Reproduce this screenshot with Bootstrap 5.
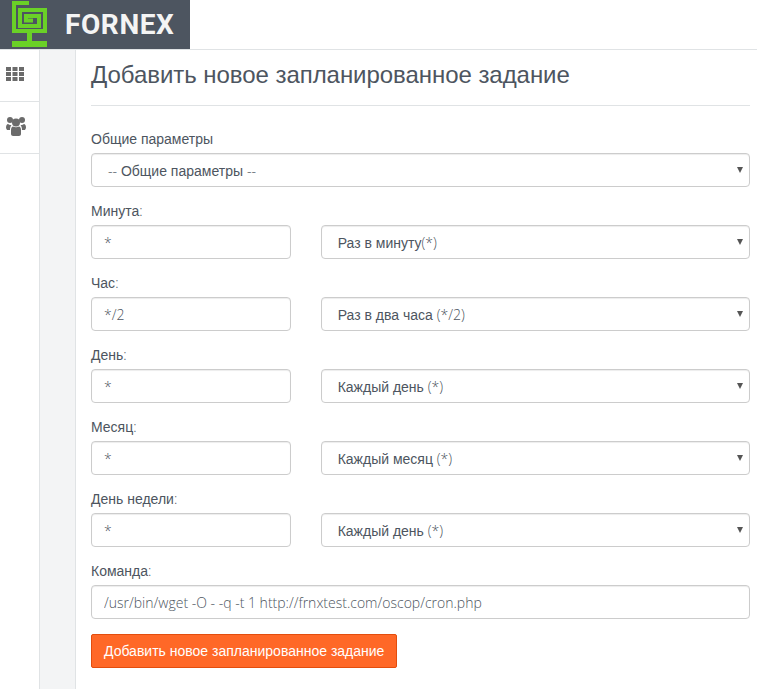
<!DOCTYPE html>
<html lang="ru">
<head>
    <meta charset="UTF-8">
    <meta name="viewport" content="width=device-width, initial-scale=1.0">
    <title>Добавить новое запланированное задание</title>
    <link href="https://cdn.jsdelivr.net/npm/bootstrap@5.3.0/dist/css/bootstrap.min.css" rel="stylesheet">
    <style>
        body { font-family: "Liberation Sans", Arial, sans-serif; font-size: 14px; color: #4d5560; height: 689px; overflow: hidden; }
        .lat { font-family: "Open Sans", sans-serif; font-weight: 300; }
        .topbar { height: 50px; border-bottom: 1px solid #e0e3e5; }
        .brand { width: 190px; height: 49px; background: #4d5560; }
        .brand-name { font-family: "Roboto", sans-serif; font-weight: 700; font-size: 28px; color: #f4f4f4; line-height: 1; margin-left: 13px; letter-spacing: .6px; }
        .side { width: 40px; border-right: 1px solid #e0e3e5; }
        .side-item { height: 52px; border-bottom: 1px solid #e0e3e5; padding: 17px 0 0 6px; }
        .side-item + .side-item { padding-top: 15px; }
        .side-item svg { display: block; }
        .side-gap { width: 36px; background: #f3f4f5; border-right: 1px solid #e0e3e5; }
        .main { padding: 0 7px 0 15px; }
        .page-title { font-size: 24px; line-height: 26px; letter-spacing: -.05px; margin: 12px 0 0; padding-bottom: 17px; border-bottom: 1px solid #e0e3e5; color: #4d5560; font-weight: 400; }
        .fld-label { display: block; line-height: 20px; margin-bottom: 4px; }
        .fld { margin-bottom: 14px; }
        .fld-row { --bs-gutter-x: 30px; }
        .form-control, .form-select { height: 34px; font-size: 14px; line-height: 22px; color: #4d5560; border: 1px solid #ccc; border-radius: 4px; padding: 6px 12px; box-shadow: inset 0 1px 1px rgba(0,0,0,.075); }
        .form-select { padding: 6px 16px; background-image: url("data:image/svg+xml,%3csvg xmlns='http://www.w3.org/2000/svg' viewBox='0 0 6 6'%3e%3cpath fill='%23555' d='M0 0h6L3 6z'/%3e%3c/svg%3e"); background-size: 6px 6px; background-position: right 6px center; }
        .btn-add { background: #ff6827; border: 1px solid #e34d0d; color: #fff; font-size: 14px; height: 34px; padding: 6px 12px; border-radius: 2px; margin-top: 1px; }
    </style>
</head>
<body>
<!-- Шапка -->
<div class="topbar">
    <div class="brand d-flex align-items-center">
        <svg class="flex-shrink-0" style="margin-left:12px" width="40" height="49" viewBox="0 0 40 49">
            <path fill="none" stroke="#6ad127" stroke-width="4" d="M2 33V3h15M2 31h31V10H8v16h19V16H14v4.500h7"/>
            <path fill="#6ad127" d="M15 32h5v9h-5zM0 41h35v6H0z"/>
        </svg>
        <span class="brand-name">FORNEX</span>
    </div>
</div>

<div class="d-flex" style="height:639px">
    <!-- Боковое меню -->
    <div class="side flex-shrink-0">
        <div class="side-item">
            <svg width="18" height="14" viewBox="0 0 18 14" fill="#6b6b6b">
                <path d="M0 0h5v4H0zM6.500 0h5v4h-5zM13 0h5v4h-5zM0 5h5v4H0zM6.500 5h5v4h-5zM13 5h5v4h-5zM0 10h5v4H0zM6.500 10h5v4h-5zM13 10h5v4h-5z"/>
            </svg>
        </div>
        <div class="side-item">
            <svg width="20" height="19" viewBox="0 0 20 19" fill="#6b6b6b">
                <circle cx="4" cy="3" r="3"/><circle cx="16" cy="3" r="3"/><circle cx="10" cy="5.500" r="4"/>
                <path d="M0 11c0-3 1-4 2-4 1 1 3 1 3.500 1C4.500 9 4 11 4 13H1zM20 11c0-3-1-4-2-4-1 1-3 1-3.500 1 1 1 1.500 3 1.500 5h3zM5 13c0-2 1-3.500 2-3.500 1.500 1 4.500 1 6 0 1 0 2 1.500 2 3.500v4c0 1-1 2-2 2H7c-1 0-2-1-2-2z"/>
            </svg>
        </div>
    </div>
    <div class="side-gap flex-shrink-0"></div>

    <!-- Форма -->
    <div class="main flex-grow-1">
        <h1 class="page-title">Добавить новое запланированное задание</h1>
        <form style="margin-top:23px">
            <div class="fld">
                <label class="fld-label">Общие параметры</label>
                <div class="form-select"><span class="lat">--</span> Общие параметры <span class="lat">--</span></div>
            </div>
            <div class="fld">
                <label class="fld-label">Минута<span class="lat">:</span></label>
                <div class="row fld-row">
                    <div class="col-4"><input class="form-control lat" value="*"></div>
                    <div class="col-8"><div class="form-select">Раз в минуту<span class="lat">(*)</span></div></div>
                </div>
            </div>
            <div class="fld">
                <label class="fld-label">Час<span class="lat">:</span></label>
                <div class="row fld-row">
                    <div class="col-4"><input class="form-control lat" value="*/2"></div>
                    <div class="col-8"><div class="form-select">Раз в два часа <span class="lat">(*/2)</span></div></div>
                </div>
            </div>
            <div class="fld">
                <label class="fld-label">День<span class="lat">:</span></label>
                <div class="row fld-row">
                    <div class="col-4"><input class="form-control lat" value="*"></div>
                    <div class="col-8"><div class="form-select">Каждый день <span class="lat">(*)</span></div></div>
                </div>
            </div>
            <div class="fld">
                <label class="fld-label">Месяц<span class="lat">:</span></label>
                <div class="row fld-row">
                    <div class="col-4"><input class="form-control lat" value="*"></div>
                    <div class="col-8"><div class="form-select">Каждый месяц <span class="lat">(*)</span></div></div>
                </div>
            </div>
            <div class="fld">
                <label class="fld-label">День недели<span class="lat">:</span></label>
                <div class="row fld-row">
                    <div class="col-4"><input class="form-control lat" value="*"></div>
                    <div class="col-8"><div class="form-select">Каждый день <span class="lat">(*)</span></div></div>
                </div>
            </div>
            <div class="fld">
                <label class="fld-label">Команда<span class="lat">:</span></label>
                <input class="form-control lat" value="/usr/bin/wget -O - -q -t 1 http://frnxtest.com/oscop/cron.php">
            </div>
            <button type="button" class="btn btn-add">Добавить новое запланированное задание</button>
        </form>
    </div>
</div>

<script src="https://cdn.jsdelivr.net/npm/bootstrap@5.3.0/dist/js/bootstrap.bundle.min.js"></script>
</body>
</html>
